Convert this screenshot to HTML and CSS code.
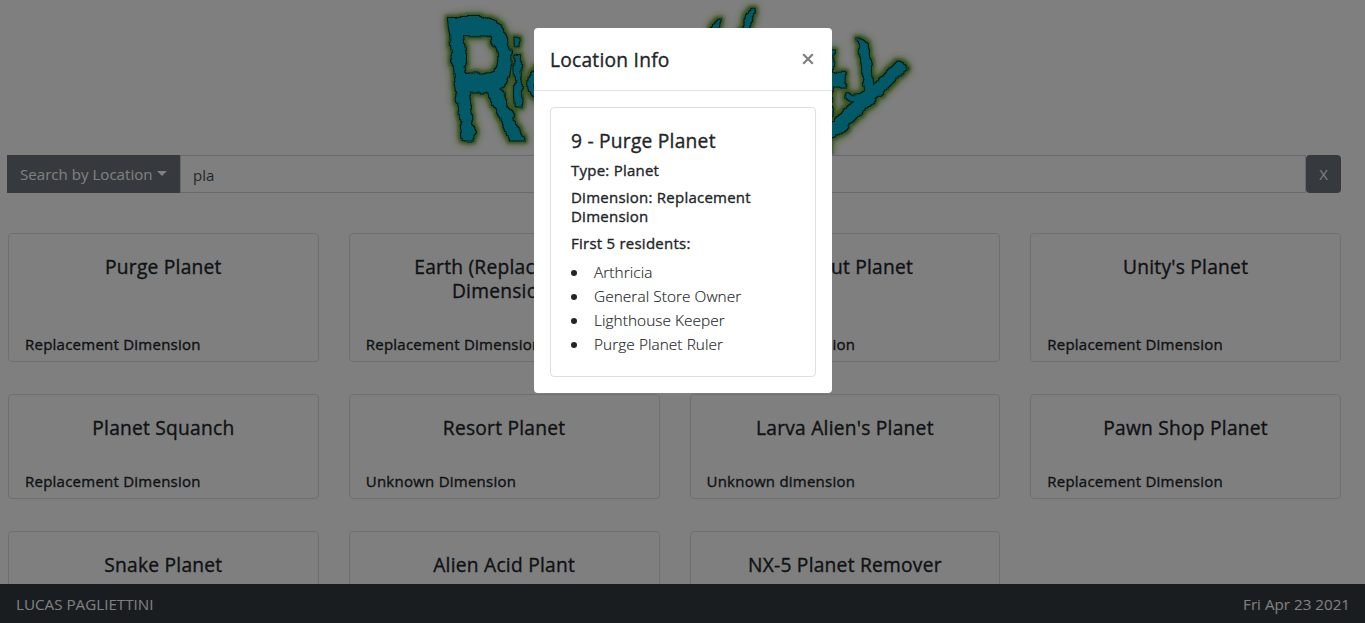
FILE: index.html
```html
<!DOCTYPE html>
<html lang="en">
<head>
<meta charset="utf-8">
<title>Rick and Morty</title>
<link rel="stylesheet" href="styles.css">
</head>
<body>
<header class="banner">
  <svg class="logo" viewBox="430 0 500 155" role="img" aria-label="Rick and Morty">
    <defs>
      <filter id="ooze" filterUnits="userSpaceOnUse" x="430" y="0" width="500" height="155" color-interpolation-filters="sRGB">
        <feTurbulence type="fractalNoise" baseFrequency="0.1" numOctaves="2" seed="4" result="noise"/>
        <feDisplacementMap in="SourceGraphic" in2="noise" scale="7" xChannelSelector="R" yChannelSelector="G" result="face"/>
        <feMorphology in="face" operator="dilate" radius="1" result="fat"/>
        <feFlood flood-color="#053a35"/><feComposite in2="fat" operator="in" result="outline"/>
        <feMorphology in="face" operator="dilate" radius="3" result="halo"/>
        <feGaussianBlur in="halo" stdDeviation="1.4" result="haloSoft"/>
        <feFlood flood-color="#71a43c"/><feComposite in2="haloSoft" operator="in" result="green"/>
        <feGaussianBlur in="halo" stdDeviation="4" result="wide"/>
        <feFlood flood-color="#8fbf63"/><feComposite in2="wide" operator="in" result="glow"/>
        <feMerge><feMergeNode in="glow"/><feMergeNode in="green"/><feMergeNode in="outline"/><feMergeNode in="face"/></feMerge>
      </filter>
    </defs>
    <g class="logo-letters" filter="url(#ooze)">
      <text transform="matrix(.97 0 .21 1.72 456 138)">R</text>
      <text class="slim" transform="matrix(.6 0 .03 .94 512 106)">i</text>
      <text class="slim" transform="matrix(.6 0 0 .62 526 100)">c</text>
      <text class="slim" transform="matrix(1.15 0 -.1 1.9 809 174)">t</text>
      <text class="slim" transform="matrix(.98 .58 -.22 .77 846 79)">y</text>
      <path class="drip" d="M909 67 886 90 866 108 850 125 832 139 824 134 845 110 868 92 874 84 890 77Z"/>
      <path class="drip" d="M755 6 752 20 745 34 739 32 746 17Z"/>
      <path class="drip" d="M721 18 718 30 711 38 709 32Z"/>
    </g>
  </svg>
</header>
<main class="page">
  <div class="search">
    <button class="search-mode">Search by Location<span class="caret"></span></button>
    <input class="search-input" value="pla">
    <button class="search-clear">X</button>
  </div>
  <section class="cards">
    <article class="card"><h5 class="card-title">Purge Planet</h5><h6 class="card-dim">Replacement Dimension</h6></article>
    <article class="card"><h5 class="card-title">Earth (Replacement<br>Dimension)</h5><h6 class="card-dim">Replacement Dimension</h6></article>
    <article class="card"><h5 class="card-title">Hideout Planet</h5><h6 class="card-dim">Unknown dimension</h6></article>
    <article class="card"><h5 class="card-title">Unity's Planet</h5><h6 class="card-dim">Replacement Dimension</h6></article>
    <article class="card"><h5 class="card-title">Planet Squanch</h5><h6 class="card-dim">Replacement Dimension</h6></article>
    <article class="card"><h5 class="card-title">Resort Planet</h5><h6 class="card-dim">Unknown Dimension</h6></article>
    <article class="card"><h5 class="card-title">Larva Alien's Planet</h5><h6 class="card-dim">Unknown dimension</h6></article>
    <article class="card"><h5 class="card-title">Pawn Shop Planet</h5><h6 class="card-dim">Replacement Dimension</h6></article>
    <article class="card"><h5 class="card-title">Snake Planet</h5></article>
    <article class="card"><h5 class="card-title">Alien Acid Plant</h5></article>
    <article class="card"><h5 class="card-title">NX-5 Planet Remover</h5></article>
  </section>
</main>
<footer class="footer"><span class="author">LUCAS PAGLIETTINI</span><span class="date">Fri Apr 23 2021</span></footer>
<div class="backdrop">
  <div class="modal" role="dialog">
    <div class="modal-header"><h5 class="modal-title">Location Info</h5>
      <button class="close" aria-label="Close"><svg viewBox="0 0 12 12" width="12" height="12"><path d="M1.2 1.2 10.8 10.8M10.8 1.2 1.2 10.8"/></svg></button>
    </div>
    <div class="modal-body">
      <div class="info">
        <h5 class="info-title">9 - Purge Planet</h5>
        <h6 class="info-line">Type: Planet</h6>
        <h6 class="info-line">Dimension: Replacement Dimension</h6>
        <h6 class="info-line">First 5 residents:</h6>
        <ul class="residents"><li>Arthricia</li><li>General Store Owner</li><li>Lighthouse Keeper</li><li>Purge Planet Ruler</li></ul>
      </div>
    </div>
  </div>
</div>
</body>
</html>
```
FILE: styles.css
```css
* { box-sizing: border-box; }
html, body { height: 100%; margin: 0; overflow: hidden; }
body { font: 400 15px/24px "Open Sans", "Noto Sans", sans-serif; color: #212529; background: #fff; }
h5, h6 { margin: 0; font-weight: 500; letter-spacing: .24px; -webkit-text-stroke: .35px currentColor; }
button, input { font: inherit; }
.banner { display: flex; height: 155px; padding-left: 430px; }
.logo { width: 500px; height: 155px; }
.logo-letters { font: 400 100px "Liberation Sans", sans-serif; fill: #04b4d0; stroke: #04b4d0; stroke-width: 3; }
.logo-letters .slim { stroke-width: .8; }
.logo-letters .drip { stroke: none; }
.page { padding: 0 24px 0 7px; }
.search { display: flex; height: 38px; }
.search-mode { display: flex; align-items: center; gap: 4px; width: 173px; padding: 0 0 1px 13px; border: 0; background: #6c757d; color: #fff; font-size: 15.1px; white-space: nowrap; }
.caret { border-top: 5px solid; border-left: 5px solid transparent; border-right: 5px solid transparent; }
.search-input { flex: 1; min-width: 0; padding: 2px 12px 0; border: 1px solid #ced4da; background: #fff; color: #495057; }
.search-clear { width: 35px; padding: 0; border: 0; border-radius: 4px; background: #6c757d; color: #fff; }
.cards { display: grid; grid-template-columns: repeat(4, 1fr); grid-template-rows: 129px 105px 105px; gap: 32px 30px; margin: 40px 0 0 1px; }
.card { display: flex; flex-direction: column; justify-content: space-between; padding: 21px 16px 7px; border: 1px solid #dfdfdf; border-radius: 4px; }
.card-title { font-size: 19.2px; line-height: 24px; text-align: center; }
.card-dim { font-size: 15px; line-height: 19px; }
.footer { position: fixed; inset: auto 0 0; display: flex; justify-content: space-between; height: 39px; padding: 8px 15px 0 16px; background: #343a40; color: #fff; font-size: 15.2px; }
.backdrop { position: fixed; inset: 0; display: flex; align-items: flex-start; justify-content: center; padding: 28px 0 0 1px; background: rgba(0, 0, 0, .5); }
.modal { width: 298px; height: 365px; border-radius: 4px; background: #fff; }
.modal-header { display: flex; justify-content: space-between; height: 63px; padding: 17px 18.5px 0 16px; border-bottom: 1px solid #dee2e6; }
.modal-title, .info-title { font-size: 19.2px; line-height: 30px; }
.close { display: flex; align-items: center; height: 28px; padding: 0; border: 0; background: none; }
.close path { fill: none; stroke: #7f7f7f; stroke-width: 2.2; }
.modal-body { padding: 16px; }
.info { height: 270px; padding: 20px; border: 1px solid #dfdfdf; border-radius: 4px; }
.info-title.info-title { line-height: 24px; margin: 1px 0 8px; }
.info-line { margin-bottom: 8px; font-size: 15px; line-height: 19px; }
.residents { margin: 0; padding: 0; list-style: none; font-weight: 300; font-size: 15.4px; letter-spacing: .06px; -webkit-text-stroke: .15px currentColor; }
.residents li { display: flex; align-items: center; gap: 17px; }
.residents li::before { content: ""; width: 6px; height: 6px; border-radius: 50%; background: #212529; }
```
